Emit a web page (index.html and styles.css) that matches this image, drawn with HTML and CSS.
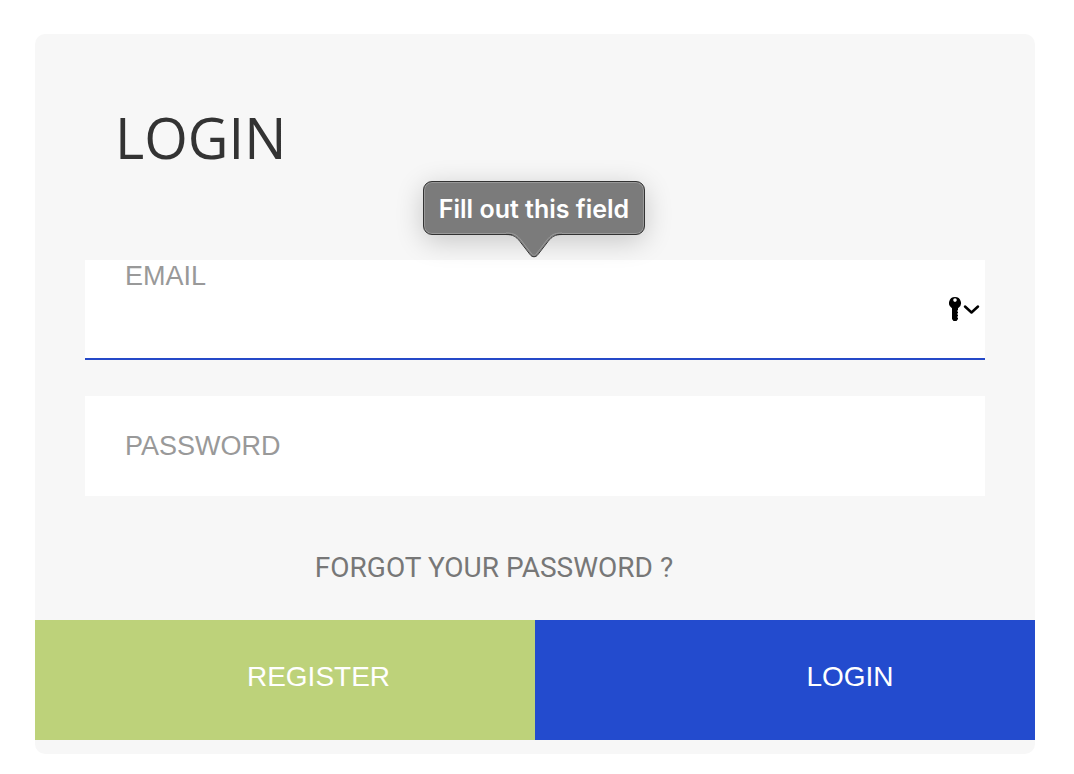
FILE: index.html
```html
<!DOCTYPE html>
<html lang="en">
<head>
  <meta charset="UTF-8" />
  <meta name="viewport" content="width=device-width, initial-scale=1" />
  <title>Login</title>
  <link rel="stylesheet" href="styles.css">
</head>
<body>
  <div class="login-card">
    <h1>LOGIN</h1>
    <form id="loginForm" novalidate>
      <div class="input-group active">
        <label class="input-label" for="email">EMAIL</label>
        <input type="email" id="email" required autocomplete="username" />
        <button type="button" class="key-button" aria-label="Saved passwords">
          <svg width="32" height="26" viewBox="0 0 32 26" fill="none">
            <path fill="#000" fill-rule="evenodd" d="M6 1a6 6 0 0 0-3 11.200V23l1.500 2h3l1.500-2v-1l-1-1 1-1v-1l-1-1 1-1v-1l-1-1 1-1v-1.800A6 6 0 0 0 6 1zm0 1.300a1.800 1.800 0 1 1 0 3.600 1.800 1.800 0 0 1 0-3.600z"/>
            <path stroke="#000" stroke-width="2.500" stroke-linecap="round" stroke-linejoin="round" d="M16 10.500l6.500 6 6.500-6"/>
          </svg>
        </button>
        <div class="tooltip" role="alert">
          Fill out this field
          <svg class="tooltip-arrow" width="56" height="26" viewBox="0 0 56 26">
            <path fill="#7b7b7b" d="M0 0v2c7 0 10 2 14 7l10 13c2 4 6 4 8 0l10-13c4-5 7-7 14-7V0z"/>
            <path fill="none" stroke="#999" d="M0 1c8 0 11 2 15 7l10 13c2 3 4 3 6 0l10-13c4-5 7-7 15-7"/>
            <path fill="none" stroke="#333" d="M0 2.500c7 0 10 2 14 7l10 13c2 3 6 3 8 0l10-13c4-5 7-7 14-7"/>
          </svg>
        </div>
      </div>
      <div class="input-group">
        <label class="input-label" for="password">PASSWORD</label>
        <input type="password" id="password" required autocomplete="current-password" />
      </div>
      <a href="#" class="forgot-password">FORGOT YOUR PASSWORD ?</a>
      <div class="actions">
        <button type="button" class="register">REGISTER</button>
        <button type="submit" class="login">LOGIN</button>
      </div>
    </form>
  </div>
</body>
</html>
```
FILE: styles.css
```css
* {
  box-sizing: border-box;
}
body {
  background: #fff;
  font-family: "Liberation Sans", Arial, sans-serif;
  margin: 0;
  padding: 34px 39px 20px 35px;
}
.login-card {
  background: #f7f7f7;
  border-radius: 10px;
  padding: 68px 0 14px;
}
h1 {
  color: #333;
  font-family: "Open Sans", sans-serif;
  font-size: 56px;
  font-weight: 400;
  line-height: 70px;
  margin: 0 80px 88px;
}
.input-group {
  position: relative;
  height: 100px;
  margin: 0 50px 36px;
  background: #fff;
}
.input-group.active {
  border-bottom: 2px solid #2549c8;
}
.input-group input {
  width: 100%;
  height: 100%;
  padding: 0 80px 0 40px;
  border: none;
  outline: none;
  background: transparent;
  font-size: 28px;
}
.input-label {
  position: absolute;
  top: 34px;
  left: 40px;
  color: #999;
  font-size: 27px;
  line-height: 32px;
}
.active .input-label {
  top: 0;
}
.key-button {
  position: absolute;
  top: 36px;
  right: 4px;
  padding: 0;
  border: none;
  background: none;
  cursor: pointer;
}
.key-button svg {
  display: block;
}
.tooltip {
  position: absolute;
  top: -79px;
  left: calc(50% - 112px);
  width: 222px;
  height: 54px;
  border: 1px solid #333;
  border-radius: 9px;
  background: #7b7b7b;
  box-shadow: inset 0 0 0 1px #999, 0 6px 28px rgba(0,0,0,0.2);
  color: #fff;
  font-family: Inter, sans-serif;
  font-size: 25px;
  font-weight: 600;
  line-height: 54px;
  text-align: center;
  white-space: nowrap;
}
.tooltip-arrow {
  position: absolute;
  top: 50px;
  left: 82px;
}
.forgot-password {
  display: block;
  margin: 0 82px 0 0;
  padding: 20px 0;
  color: #777;
  font-family: Roboto, sans-serif;
  font-size: 28px;
  font-weight: 400;
  line-height: 32px;
  text-align: center;
  text-decoration: none;
}
.actions {
  display: grid;
  grid-template-columns: 1fr 1fr;
  margin-top: 16px;
}
.actions button {
  height: 120px;
  border: none;
  color: #fff;
  font-family: "Liberation Sans", Arial, sans-serif;
  font-size: 28px;
  cursor: pointer;
}
.actions .register {
  background: #bdd27a;
  padding: 0 0 6px 67px;
}
.actions .login {
  background: #234bce;
  padding: 0 0 6px 130px;
}
```
